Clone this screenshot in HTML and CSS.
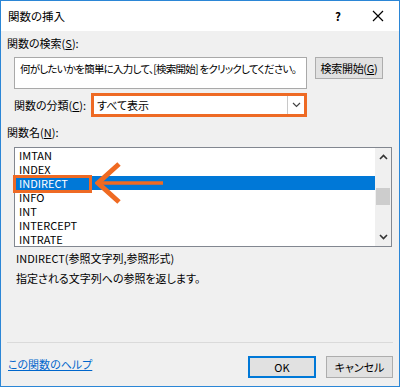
FILE: index.html
```html
<!DOCTYPE html>
<html lang="ja">
<head>
  <meta charset="UTF-8" />
  <title>関数の挿入</title>
  <link rel="stylesheet" href="styles.css">
</head>
<body>
  <div class="window">
    <div class="titlebar">
      <span class="title">関数の挿入</span>
      <span class="title-help">?</span>
      <span class="title-close">
        <svg width="12" height="12" viewBox="0 0 12 12"><path d="M1 1 L11 11 M11 1 L1 11" stroke="#000" stroke-width="1.2" fill="none"/></svg>
      </span>
    </div>

    <div class="content">
      <div class="label label-search">関数の検索(<u>S</u>):</div>
      <div class="search-row">
        <div class="search-box">何がしたいかを簡単に入力して、[検索開始] をクリックしてください。</div>
        <div class="btn btn-search">検索開始(<u>G</u>)</div>
      </div>

      <div class="category-row">
        <div class="label category-label">関数の分類(<u>C</u>):</div>
        <div class="category-select">
          <span class="category-value">すべて表示</span>
          <span class="category-drop">
            <svg width="9" height="6" viewBox="0 0 9 6"><path d="M1 1 L4.5 4.5 L8 1" stroke="#444" stroke-width="1.2" fill="none"/></svg>
          </span>
        </div>
      </div>

      <div class="label label-names">関数名(<u>N</u>):</div>
      <div class="listbox">
        <ul class="func-list">
          <li>IMTAN</li>
          <li>INDEX</li>
          <li class="selected">INDIRECT</li>
          <li>INFO</li>
          <li>INT</li>
          <li>INTERCEPT</li>
          <li>INTRATE</li>
        </ul>
        <div class="scrollbar">
          <svg class="scroll-arrow" width="9" height="6" viewBox="0 0 9 6"><path d="M1 5 L4.5 1.5 L8 5" stroke="#333" stroke-width="1.6" fill="none"/></svg>
          <div class="scroll-track"><div class="scroll-thumb"></div></div>
          <svg class="scroll-arrow" width="9" height="6" viewBox="0 0 9 6"><path d="M1 1 L4.5 4.5 L8 1" stroke="#333" stroke-width="1.6" fill="none"/></svg>
        </div>
        <div class="mark-box"></div>
        <svg class="mark-arrow" width="72" height="42" viewBox="0 0 72 42">
          <path d="M24 2 L3 21 L24 40" stroke="#ef6a22" stroke-width="5" fill="none"/>
          <path d="M5 21 L68 21" stroke="#ef6a22" stroke-width="3.5" fill="none"/>
        </svg>
      </div>

      <div class="desc">
        <div>INDIRECT(参照文字列,参照形式)</div>
        <div>指定される文字列への参照を返します。</div>
      </div>

      <div class="footer">
        <a class="help-link" href="#">この関数のヘルプ</a>
        <div class="footer-buttons">
          <div class="btn btn-ok">OK</div>
          <div class="btn btn-cancel">キャンセル</div>
        </div>
      </div>
    </div>
  </div>
</body>
</html>
```

FILE: styles.css
```css
body {
  margin: 0;
  font-family: "Noto Sans CJK JP", sans-serif;
  font-size: 11px;
  font-feature-settings: "palt";
  color: #000;
}

.window {
  box-sizing: border-box;
  width: 400px;
  height: 387px;
  border: 1px solid #2b86d6;
  display: flex;
  flex-direction: column;
  background: #f0f0f0;
}

.titlebar {
  height: 30px;
  background: #fff;
  display: flex;
  align-items: center;
  padding-left: 7px;
  font-size: 11.5px;
}

.title {
  flex: 1;
}

.title-help {
  width: 12px;
  text-align: center;
  font-weight: bold;
  margin-right: 28px;
}

.title-close {
  width: 12px;
  margin-right: 15px;
  display: flex;
}

.content {
  flex: 1;
  display: flex;
  flex-direction: column;
  padding: 0 6px 0 6px;
}

.label {
  line-height: 14px;
  white-space: nowrap;
}

.label-search {
  margin-top: 5px;
}

.search-row {
  display: flex;
  align-items: flex-start;
  margin-top: 7px;
  padding-left: 7px;
}

.search-box {
  box-sizing: border-box;
  width: 293px;
  height: 32px;
  background: #fff;
  border: 1px solid #a9a9a9;
  padding: 4px 5px;
  font-size: 10.5px;
  letter-spacing: -0.75px;
  line-height: 14px;
  white-space: nowrap;
  overflow: hidden;
}

.btn {
  box-sizing: border-box;
  height: 22px;
  display: flex;
  align-items: center;
  justify-content: center;
  background: #e1e1e1;
  border: 1px solid #adadad;
  white-space: nowrap;
}

.btn-search {
  width: 68px;
  margin-left: 8px;
  letter-spacing: -0.3px;
}

.category-row {
  display: flex;
  align-items: center;
  margin-top: 4px;
  padding-left: 7px;
}

.category-label {
  width: 77px;
}

.category-select {
  box-sizing: border-box;
  width: 216px;
  height: 24px;
  border: 3px solid #ee6a24;
  background: #fff;
  display: flex;
  align-items: stretch;
}

.category-value {
  flex: 1;
  display: flex;
  align-items: center;
  padding-left: 3px;
}

.category-drop {
  width: 16px;
  border-left: 1px solid #c8c8c8;
  display: flex;
  align-items: center;
  justify-content: center;
}

.label-names {
  margin-top: 8px;
}

.listbox {
  position: relative;
  box-sizing: border-box;
  width: 378px;
  height: 100px;
  margin: 8px 0 0 7px;
  border: 1px solid #828790;
  background: #fff;
  display: flex;
}

.func-list {
  flex: 1;
  margin: 0;
  padding: 0;
  list-style: none;
}

.func-list li {
  height: 14px;
  line-height: 14px;
  padding-left: 4px;
  font-size: 11px;
}

.func-list li.selected {
  background: #0078d7;
  color: #fff;
}

.scrollbar {
  width: 16px;
  background: #f0f0f0;
  display: flex;
  flex-direction: column;
  align-items: center;
}

.scroll-arrow {
  margin: 6px 0;
}

.scroll-track {
  flex: 1;
  align-self: stretch;
  padding-top: 22px;
}

.scroll-thumb {
  height: 17px;
  margin: 0 1px;
  background: #cdcdcd;
}

.mark-box {
  position: absolute;
  left: -2px;
  top: 27px;
  width: 73px;
  height: 12px;
  border: 3px solid #ee6a24;
}

.mark-arrow {
  position: absolute;
  left: 80px;
  top: 14px;
}

.desc {
  margin-top: 1px;
  padding-left: 9px;
  line-height: 20px;
}

.footer {
  margin-top: auto;
  border-top: 1px solid #dadada;
  display: flex;
  align-items: flex-start;
  justify-content: space-between;
  padding: 13px 0 8px 1px;
}

.help-link {
  color: #0066cc;
  margin-top: 1px;
  line-height: 14px;
}

.footer-buttons {
  display: flex;
  gap: 10px;
}

.btn-ok {
  width: 68px;
  border: 2px solid #0078d7;
}

.btn-cancel {
  width: 67px;
}
```
